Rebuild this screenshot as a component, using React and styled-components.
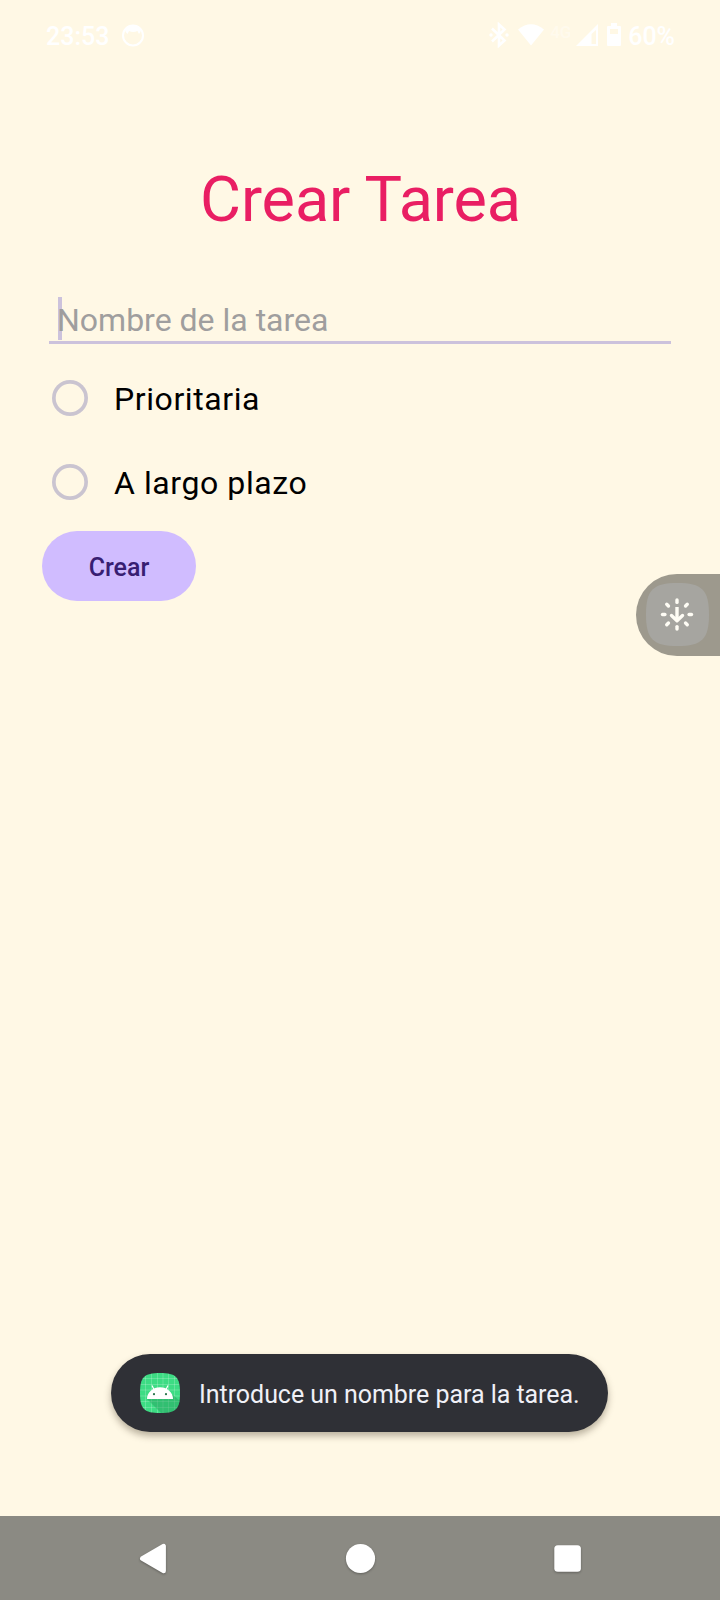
import React from "react";
import styled, { createGlobalStyle } from "styled-components";

const GlobalStyle = createGlobalStyle`
  * { box-sizing: border-box; }
  body { margin: 0; background: #fff8e5; font-family: Roboto, sans-serif; }
`;

const Screen = styled.div`
  position: relative;
  display: flex;
  flex-direction: column;
  width: 720px;
  height: 1600px;
  overflow: hidden;
  background: #fff8e5;
`;

const StatusBar = styled.header`
  display: flex;
  align-items: center;
  justify-content: space-between;
  height: 73px;
  padding: 0 45px 0 46px;
  color: #fff;
  font-size: 25px;
  font-weight: 500;
  line-height: 30px;
`;

const StatusGroup = styled.div`
  display: flex;
  align-items: center;
`;

const StatusIcon = styled.svg`
  display: block;
  margin-left: ${(p) => p.$gap || 0}px;
  margin-bottom: ${(p) => p.$lift || 0}px;
`;

const NetworkType = styled.span`
  width: 22px;
  height: 18px;
  margin: -9px 0 0 6px;
  font-size: 17px;
  line-height: 18px;
  color: rgba(255, 255, 255, 0.35);
`;

const BatteryLevel = styled.span`
  margin-left: 7px;
`;

const Clock = styled.span`
  width: 62px;
`;

const Title = styled.h1`
  margin: 87px 0 0;
  padding-left: 1px;
  font-size: 63px;
  font-weight: 400;
  letter-spacing: -0.1px;
  line-height: 80px;
  text-align: center;
  color: #e91e63;
`;

const Form = styled.form`
  display: flex;
  flex-direction: column;
  align-items: flex-start;
  padding: 0 49px;
  margin-top: 57px;
`;

const NameField = styled.div`
  position: relative;
  isolation: isolate;
  align-self: stretch;
  height: 47px;
  padding-left: 8px;
  border-bottom: 3px solid #ccc2dc;
  color: #9f9e9e;
  font-size: 32px;
  line-height: 47px;
`;

const Caret = styled.span`
  position: absolute;
  z-index: -1;
  left: 9px;
  top: 0;
  width: 4px;
  height: 43px;
  background: #ccc2dc;
`;

const Options = styled.div`
  margin-top: 12px;
`;

const Option = styled.label`
  display: flex;
  align-items: center;
  gap: 26px;
  height: 84px;
  padding-left: 3px;
  font-size: 32px;
  letter-spacing: 0.58px;
  color: #000;
`;

const Radio = styled.span`
  width: 36px;
  height: 36px;
  border-radius: 50%;
  box-shadow: inset 0 0 0 3.7px #cac4d0;
`;

const OptionLabel = styled.span`
  padding-top: 1px;
  line-height: 40px;
`;

const CreateButton = styled.button`
  width: 154px;
  height: 70px;
  margin: 7px 0 0 -7px;
  padding: 3px 0 0;
  border: 0;
  border-radius: 35px;
  background: #d0bcff;
  color: #381e72;
  font-family: inherit;
  font-size: 25px;
  font-weight: 500;
`;

const FloatingHandle = styled.div`
  position: absolute;
  right: 0;
  top: 573.5px;
  display: flex;
  align-items: center;
  width: 84px;
  height: 82.5px;
  padding-left: 10px;
  border-radius: 41px 0 0 41px;
  background: #9d998d;
`;

const Toast = styled.div`
  position: absolute;
  left: 111px;
  top: 1354px;
  display: flex;
  align-items: center;
  gap: 19px;
  width: 497px;
  height: 78px;
  padding-left: 29px;
  border-radius: 39px;
  background: #2f3036;
  box-shadow: 0 4px 7px rgba(60, 50, 30, 0.36);
  color: #f0f0f7;
  font-size: 25px;
  letter-spacing: -0.04px;
  line-height: 30px;
  white-space: nowrap;
`;

const ToastText = styled.span`
  padding-top: 4px;
`;

const NavBar = styled.nav`
  display: flex;
  height: 84px;
  margin-top: auto;
  padding: 0 49px;
  background: #8b8a83;
`;

const NavButton = styled.span`
  flex: 1;
  display: flex;
  align-items: center;
  justify-content: center;
`;

const NavIcon = styled.svg`
  display: block;
  overflow: visible;
  filter: drop-shadow(0 1px 1px rgba(0, 0, 0, 0.3));
`;

const rays = [0, 45, 90, 135, 180, 225, 270, 315];

export default function App() {
  return (
    <Screen>
      <GlobalStyle />
      <StatusBar>
        <StatusGroup>
          <Clock>23:53</Clock>
          <StatusIcon $gap={13} $lift={1} width="24" height="24" viewBox="0 0 24 24">
            <circle cx="12" cy="11.5" r="10" fill="none" stroke="#fff" strokeWidth="2" />
            <path d="M4 5 Q12-1 20 5 Q20 8 18 10 L16.5 7 Q12 9 8 7 L6.5 10 Q4 8 4 5Z" fill="#fff" />
          </StatusIcon>
        </StatusGroup>
        <StatusGroup>
          <StatusIcon $lift={3} width="20" height="26" viewBox="0 0 20 26">
            <path d="M3 6.5 L15.5 18.5 L10 23.5 V2.5 L15.5 7.5 L3 19.5" fill="none" stroke="#fff" strokeWidth="2.6" />
            <circle cx="2" cy="13" r="1.7" fill="#fff" />
            <circle cx="18" cy="13" r="1.7" fill="#fff" />
          </StatusIcon>
          <StatusIcon $gap={9} $lift={4} width="26" height="26" viewBox="0 0 26 26">
            <path d="M0 7.5 Q13-3 26 7.5 L13 23.5Z" fill="#fff" />
          </StatusIcon>
          <NetworkType>4G</NetworkType>
          <StatusIcon $gap={4} $lift={2} width="22" height="24" viewBox="0 0 22 24">
            <path fillRule="evenodd" d="M22 0 V22 H0Z M20 6 L15.5 10 V20 H20Z" fill="#fff" />
          </StatusIcon>
          <StatusIcon $gap={9} $lift={3} width="14" height="26" viewBox="0 0 14 26">
            <path
              fillRule="evenodd"
              d="M4 1 H10 V4 H13 Q14 4 14 5 V23 Q14 24 13 24 H1 Q0 24 0 23 V5 Q0 4 1 4 H4Z M3 7 V12 H11 V7Z"
              fill="#fff"
            />
          </StatusIcon>
          <BatteryLevel>60%</BatteryLevel>
        </StatusGroup>
      </StatusBar>

      <Title>Crear Tarea</Title>

      <Form>
        <NameField>
          <Caret />
          Nombre de la tarea
        </NameField>
        <Options>
          <Option>
            <Radio />
            <OptionLabel>Prioritaria</OptionLabel>
          </Option>
          <Option>
            <Radio />
            <OptionLabel>A largo plazo</OptionLabel>
          </Option>
        </Options>
        <CreateButton type="button">Crear</CreateButton>
      </Form>

      <FloatingHandle>
        <svg width="63" height="63" viewBox="0 0 63 63">
          <path d="M31.5 0 C56 0 63 7 63 31.5 S56 63 31.5 63 0 56 0 31.5 7 0 31.5 0Z" fill="#a6a5a0" />
          <g fill="none" stroke="#fffdf5" strokeWidth="3.4" strokeLinecap="round">
            {rays.map((angle) => (
              <path key={angle} d="M31 17 V19.4" transform={`rotate(${angle} 31 31.5)`} />
            ))}
            <path d="M31 24 V37" strokeLinecap="butt" />
            <path d="M25.5 32.5 L31 37.7 L36.5 32.5" strokeLinejoin="round" />
          </g>
        </svg>
      </FloatingHandle>

      <Toast>
        <svg width="40" height="40" viewBox="0 0 40 40">
          <defs>
            <clipPath id="launcher">
              <path d="M20 0 C36 0 40 4 40 20 S36 40 20 40 0 36 0 20 4 0 20 0Z" />
            </clipPath>
          </defs>
          <g clipPath="url(#launcher)">
            <rect width="40" height="40" fill="#3ddc84" />
            <path
              d="M5.5 0V40 M11.5 0V40 M17.5 0V40 M23 0V40 M28.5 0V40 M34.5 0V40 M0 5.5H40 M0 11.5H40 M0 17H40 M0 23H40 M0 28.5H40 M0 34.5H40"
              stroke="#fff"
              strokeOpacity="0.25"
              strokeWidth="0.8"
            />
            <path d="M7 26 L22 41 H40 V28 L33 22Z" fill="#249b5c" fillOpacity="0.45" />
            <path d="M7 26 A13 11.8 0 0 1 33 26Z" fill="#fff" />
            <path d="M14.2 17 L12 12.5 M25.8 17 L28 12.5" stroke="#fff" strokeWidth="1.2" />
            <circle cx="14" cy="21.2" r="1.1" fill="#28744b" />
            <circle cx="26" cy="21.2" r="1.1" fill="#28744b" />
          </g>
        </svg>
        <ToastText>Introduce un nombre para la tarea.</ToastText>
      </Toast>

      <NavBar>
        <NavButton>
          <NavIcon width="32" height="32" viewBox="0 0 32 32">
            <path d="M5.2 16.5 L26.7 4 V29Z" fill="#fff" stroke="#fff" strokeWidth="4.4" strokeLinejoin="round" />
          </NavIcon>
        </NavButton>
        <NavButton>
          <NavIcon width="30" height="30" viewBox="0 0 30 30">
            <circle cx="15.5" cy="15.5" r="14.6" fill="#fff" />
          </NavIcon>
        </NavButton>
        <NavButton>
          <NavIcon width="28" height="28" viewBox="0 0 28 28">
            <rect x="1.3" y="1.2" width="26.6" height="26.6" rx="3.5" fill="#fff" />
          </NavIcon>
        </NavButton>
      </NavBar>
    </Screen>
  );
}
